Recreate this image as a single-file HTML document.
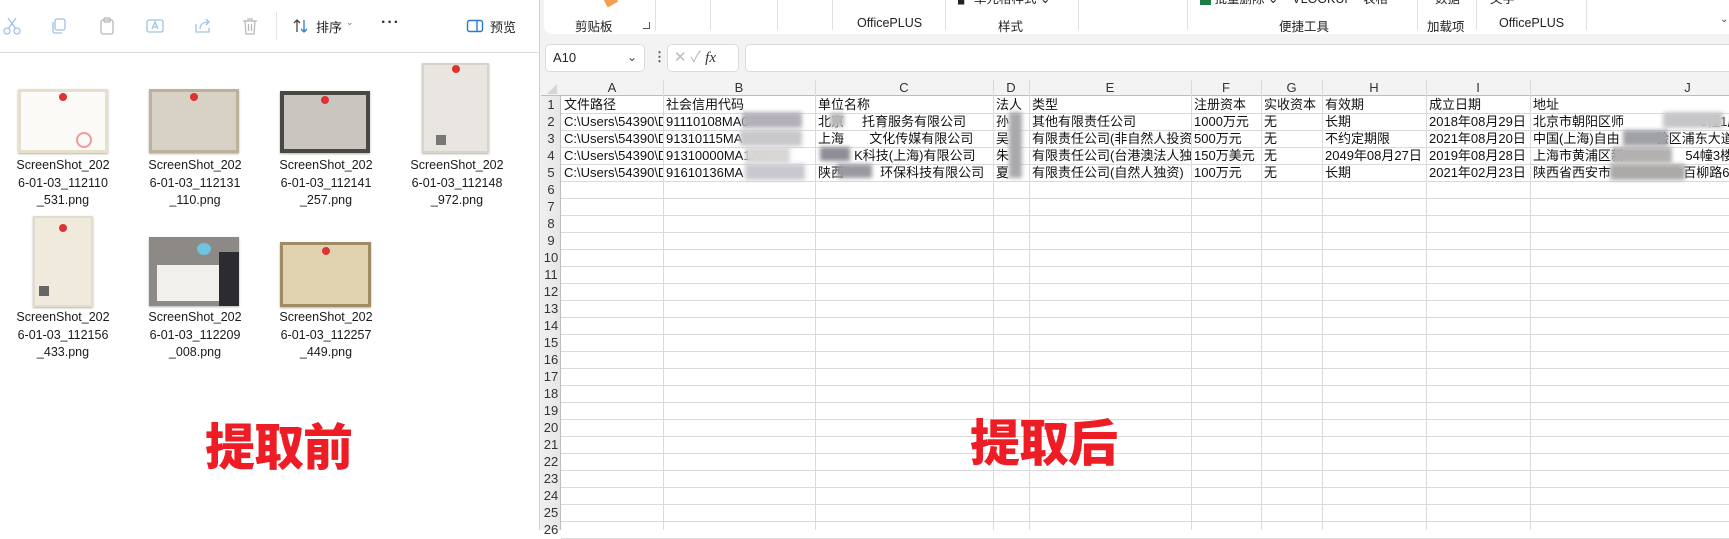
<!DOCTYPE html>
<html><head><meta charset="utf-8"><style>
*{margin:0;padding:0;box-sizing:border-box}
body{width:1729px;height:530px;overflow:hidden;background:#fff;position:relative;font-family:"Liberation Sans","Noto Sans CJK SC",sans-serif;color:#222}
.a{position:absolute}
.ic{position:absolute;top:16px;width:20px;height:20px}
.lbl{position:absolute;width:110px;text-align:center;font-size:12.5px;line-height:17.5px;color:#1a1a1a}
.th{position:absolute;box-shadow:0 1px 2px rgba(0,0,0,.3)}
.seal{position:absolute;width:8px;height:8px;border-radius:50%;background:#d33;left:50%;margin-left:-4px}
.cell{position:absolute;height:17px;line-height:17px;font-size:13px;white-space:nowrap;overflow:hidden;padding-left:2px;color:#111}
.vl{position:absolute;top:80px;width:1px;height:450px;background:#dadada}
.hl{position:absolute;left:561px;height:1px;width:1168px;background:#dadada}
.rn{position:absolute;left:541px;width:20px;height:17px;line-height:17px;font-size:13px;text-align:center;color:#333}
.ch{position:absolute;top:80px;height:16px;line-height:16px;font-size:13px;text-align:center;color:#333}
.blur{position:absolute;filter:blur(2px)}
.red{position:absolute;font-size:50px;font-weight:900;color:#ee1c25;letter-spacing:-1px;font-family:"Noto Sans CJK SC",sans-serif;line-height:1}
.rl{position:absolute;top:16px;font-size:12.5px;color:#222}
.sep{position:absolute;top:0;width:1px;height:30px;background:#e0e0e0}
</style></head><body>

<svg class="ic" style="left:2px" viewBox="0 0 20 20" fill="none" stroke="#9cc3e6" stroke-width="1.3"><circle cx="5" cy="15" r="3"/><circle cx="15" cy="15" r="3"/><path d="M6.5 12.5L14 2M13.5 12.5L6 2"/></svg>
<svg class="ic" style="left:49px" viewBox="0 0 20 20" fill="none" stroke="#9cc3e6" stroke-width="1.3"><rect x="6" y="3" width="10" height="11" rx="2"/><path d="M4 6v9a2 2 0 0 0 2 2h7"/></svg>
<svg class="ic" style="left:97px" viewBox="0 0 20 20" fill="none" stroke="#b8b8b8" stroke-width="1.3"><rect x="4" y="4" width="12" height="14" rx="2"/><rect x="7" y="2" width="6" height="4" rx="1"/></svg>
<svg class="ic" style="left:145px" viewBox="0 0 20 20" fill="none" stroke="#9cc3e6" stroke-width="1.3"><rect x="2" y="4" width="16" height="12" rx="2"/><path d="M7 13l3-7 3 7M8 11h4"/></svg>
<svg class="ic" style="left:193px" viewBox="0 0 20 20" fill="none" stroke="#9cc3e6" stroke-width="1.3"><path d="M3 8v8h13v-4"/><path d="M7 13c0-5 4-7 9-7M13 3l3 3-3 3"/></svg>
<svg class="ic" style="left:240px" viewBox="0 0 20 20" fill="none" stroke="#b8b8b8" stroke-width="1.3"><path d="M3 5h14M8 5V3h4v2M5 5l1 13h8l1-13M8.5 8v7M11.5 8v7"/></svg>
<div class="a" style="left:276px;top:12px;width:1px;height:28px;background:#e5e5e5"></div>
<svg class="ic" style="left:291px" viewBox="0 0 20 20" fill="none" stroke-width="1.3"><path d="M6 16V4M3 7l3-3 3 3" stroke="#444"/><path d="M13 4v12M10 13l3 3 3-3" stroke="#2a7ad5"/></svg>
<div class="a" style="left:316px;top:17px;font-size:13px;color:#222">排序</div>
<div class="a" style="left:346px;top:17px;font-size:9px;color:#777">⌄</div>
<div class="a" style="left:381px;top:14px;font-size:16px;color:#333;letter-spacing:1px;font-weight:bold">···</div>
<svg class="ic" style="left:465px" viewBox="0 0 20 20" fill="none" stroke-width="1.4"><rect x="2.5" y="4.5" width="15" height="11" rx="2" stroke="#2a7ad5"/><path d="M12 5v10" stroke="#2a7ad5"/></svg>
<div class="a" style="left:490px;top:17px;font-size:13px;color:#222">预览</div>
<div class="a" style="left:0;top:52px;width:539px;height:1px;background:#dcdcdc"></div>

<div class="th" style="left:18px;top:89px;width:90px;height:64px;background:#fbfaf6;border:3px solid #e7e1cc"><div class="seal" style="top:1px"></div><div class="a" style="left:55px;top:40px;width:16px;height:16px;border-radius:50%;border:2px solid #f09a9a"></div></div>
<div class="th" style="left:149px;top:89px;width:90px;height:64px;background:#d8d2c6;border:3px solid #bcb29c"><div class="seal" style="top:1px"></div></div>
<div class="th" style="left:280px;top:91px;width:90px;height:62px;background:#c9c6c0;border:4px solid #4a4842"><div class="seal" style="top:1px"></div></div>
<div class="th" style="left:422px;top:63px;width:67px;height:90px;background:#e9e6e2;border:2px solid #d8d3cb"><div class="seal" style="top:0"></div><div class="a" style="left:12px;top:70px;width:10px;height:10px;background:#777"></div></div>
<div class="lbl" style="left:8px;top:157px">ScreenShot_202<br>6-01-03_112110<br>_531.png</div>
<div class="lbl" style="left:140px;top:157px">ScreenShot_202<br>6-01-03_112131<br>_110.png</div>
<div class="lbl" style="left:271px;top:157px">ScreenShot_202<br>6-01-03_112141<br>_257.png</div>
<div class="lbl" style="left:402px;top:157px">ScreenShot_202<br>6-01-03_112148<br>_972.png</div>
<div class="th" style="left:33px;top:216px;width:60px;height:91px;background:#efeadc;border:2px solid #e2dccb"><div class="seal" style="top:6px"></div><div class="a" style="left:4px;top:68px;width:10px;height:10px;background:#666"></div></div>
<div class="th" style="left:149px;top:237px;width:90px;height:69px;background:#8d8a86"><div class="a" style="left:8px;top:28px;width:62px;height:36px;background:#f2f0ec"></div><div class="a" style="left:48px;top:6px;width:14px;height:12px;border-radius:50%;background:#6fc2e0"></div><div class="a" style="left:70px;top:15px;width:20px;height:54px;background:#2c2c30"></div></div>
<div class="th" style="left:280px;top:242px;width:91px;height:65px;background:#e2d3b0;border:3px solid #9f8c62"><div class="seal" style="top:2px"></div></div>
<div class="lbl" style="left:8px;top:309px">ScreenShot_202<br>6-01-03_112156<br>_433.png</div>
<div class="lbl" style="left:140px;top:309px">ScreenShot_202<br>6-01-03_112209<br>_008.png</div>
<div class="lbl" style="left:271px;top:309px">ScreenShot_202<br>6-01-03_112257<br>_449.png</div>

<div class="red" style="left:205px;top:419px">提取前</div>

<div class="a" style="left:539px;top:0;width:1190px;height:530px;background:#f3f3f3;border-left:1px solid #d0d0d0"></div>
<div class="a" style="left:544px;top:0;width:1185px;height:34px;background:#fff;border-radius:0 0 0 8px;overflow:hidden">
<div class="a" style="left:61px;top:-3px;width:12px;height:8px;background:#f0a050;transform:rotate(-30deg)"></div>
<div class="a" style="left:414px;top:-12px;font-size:12.5px">▞ 单元格样式 ⌄</div>
<div class="a" style="left:656px;top:-12px;font-size:12.5px"><span style="display:inline-block;width:11px;height:11px;background:#1e7d45;vertical-align:middle"></span> 批量删除 ⌄ &nbsp;&nbsp; VLOOKUP &nbsp; 表格</div>
<div class="a" style="left:891px;top:-12px;font-size:12.5px">数据</div>
<div class="a" style="left:946px;top:-12px;font-size:12.5px">文字</div>
</div>
<div class="sep" style="left:655px"></div><div class="sep" style="left:710px"></div><div class="sep" style="left:777px"></div><div class="sep" style="left:832px"></div><div class="sep" style="left:945px"></div><div class="sep" style="left:1078px"></div><div class="sep" style="left:1187px"></div><div class="sep" style="left:1417px"></div><div class="sep" style="left:1476px"></div><div class="sep" style="left:1586px"></div>
<div class="rl" style="left:575px">剪贴板</div>
<div class="a" style="left:643px;top:22px;width:7px;height:7px;border-right:1px solid #555;border-bottom:1px solid #555"></div>
<div class="rl" style="left:857px">OfficePLUS</div>
<div class="rl" style="left:998px">样式</div>
<div class="rl" style="left:1279px">便捷工具</div>
<div class="rl" style="left:1427px">加载项</div>
<div class="rl" style="left:1499px">OfficePLUS</div>
<div class="a" style="left:1720px;top:14px;font-size:10px;color:#444">⌄</div>

<div class="a" style="left:545px;top:44px;width:100px;height:28px;background:#fff;border:1px solid #dcdcdc;border-radius:5px;font-size:13px;line-height:26px;padding-left:7px">A10<span style="position:absolute;right:7px;top:-1px;font-size:12px;color:#444">⌄</span></div>
<div class="a" style="left:653px;top:49px;font-size:13px;color:#555;font-weight:bold">⋮</div>
<div class="a" style="left:667px;top:44px;width:72px;height:28px;background:#fff;border:1px solid #dcdcdc;border-radius:5px;font-size:15px;line-height:26px;color:#bbb;padding-left:6px">✕ ✓ <i style="color:#333;font-family:'Liberation Serif',serif">fx</i></div>
<div class="a" style="left:745px;top:44px;width:990px;height:28px;background:#fff;border:1px solid #dcdcdc;border-radius:5px"></div>

<div class="a" style="left:541px;top:80px;width:1188px;height:450px;background:#fff"></div>
<div class="a" style="left:541px;top:80px;width:1188px;height:16px;background:#f3f3f3;border-bottom:1px solid #bdbdbd"></div>
<div class="a" style="left:541px;top:96px;width:20px;height:434px;background:linear-gradient(90deg,#f0f0f0,#e6e6e6);border-right:1px solid #bdbdbd"></div>
<div class="a" style="left:547px;top:84px;width:0;height:0;border-left:10px solid transparent;border-bottom:10px solid #d6d6d6"></div>

<div class="vl" style="left:663px"></div><div class="vl" style="left:815px"></div><div class="vl" style="left:993px"></div><div class="vl" style="left:1029px"></div><div class="vl" style="left:1191px"></div><div class="vl" style="left:1261px"></div><div class="vl" style="left:1322px"></div><div class="vl" style="left:1426px"></div><div class="vl" style="left:1530px"></div>

<div class="ch" style="left:561px;width:102px">A</div><div class="ch" style="left:663px;width:152px">B</div><div class="ch" style="left:815px;width:178px">C</div><div class="ch" style="left:993px;width:36px">D</div><div class="ch" style="left:1029px;width:162px">E</div><div class="ch" style="left:1191px;width:70px">F</div><div class="ch" style="left:1261px;width:61px">G</div><div class="ch" style="left:1322px;width:104px">H</div><div class="ch" style="left:1426px;width:104px">I</div><div class="ch" style="left:1530px;width:315px">J</div>

<div id="rows"></div>
<script>
var h='';for(var i=1;i<=26;i++){var y=96+(i-1)*17;h+='<div class="hl" style="top:'+(y+17)+'px"></div><div class="rn" style="top:'+y+'px">'+i+'</div>';}
document.getElementById('rows').innerHTML=h;
</script>

<div class="cell" style="left:562px;top:96px;width:101px">文件路径</div>
<div class="cell" style="left:664px;top:96px;width:151px">社会信用代码</div>
<div class="cell" style="left:816px;top:96px;width:177px">单位名称</div>
<div class="cell" style="left:994px;top:96px;width:35px">法人</div>
<div class="cell" style="left:1030px;top:96px;width:161px">类型</div>
<div class="cell" style="left:1192px;top:96px;width:69px">注册资本</div>
<div class="cell" style="left:1262px;top:96px;width:60px">实收资本</div>
<div class="cell" style="left:1323px;top:96px;width:103px">有效期</div>
<div class="cell" style="left:1427px;top:96px;width:103px">成立日期</div>
<div class="cell" style="left:1531px;top:96px;width:200px">地址</div>

<div class="cell" style="left:562px;top:113px;width:101px">C:\Users\54390\D</div>
<div class="cell" style="left:664px;top:113px;width:151px">91110108MA0</div>
<div class="cell" style="left:816px;top:113px;width:177px">北京&nbsp;&nbsp;&nbsp;&nbsp;&nbsp;托育服务有限公司</div>
<div class="cell" style="left:994px;top:113px;width:35px">孙</div>
<div class="cell" style="left:1030px;top:113px;width:161px">其他有限责任公司</div>
<div class="cell" style="left:1192px;top:113px;width:69px">1000万元</div>
<div class="cell" style="left:1262px;top:113px;width:60px">无</div>
<div class="cell" style="left:1323px;top:113px;width:103px">长期</div>
<div class="cell" style="left:1427px;top:113px;width:103px">2018年08月29日</div>
<div class="cell" style="left:1531px;top:113px;width:200px">北京市朝阳区师&nbsp;&nbsp;&nbsp;&nbsp;&nbsp;&nbsp;&nbsp;&nbsp;&nbsp;&nbsp;&nbsp;&nbsp;&nbsp;&nbsp;&nbsp;&nbsp;&nbsp;&nbsp;&nbsp;&nbsp;&nbsp;3幢1层</div>

<div class="cell" style="left:562px;top:130px;width:101px">C:\Users\54390\D</div>
<div class="cell" style="left:664px;top:130px;width:151px">91310115MA</div>
<div class="cell" style="left:816px;top:130px;width:177px">上海&nbsp;&nbsp;&nbsp;&nbsp;&nbsp;&nbsp;&nbsp;文化传媒有限公司</div>
<div class="cell" style="left:994px;top:130px;width:35px">吴</div>
<div class="cell" style="left:1030px;top:130px;width:161px">有限责任公司(非自然人投资</div>
<div class="cell" style="left:1192px;top:130px;width:69px">500万元</div>
<div class="cell" style="left:1262px;top:130px;width:60px">无</div>
<div class="cell" style="left:1323px;top:130px;width:103px">不约定期限</div>
<div class="cell" style="left:1427px;top:130px;width:103px">2021年08月20日</div>
<div class="cell" style="left:1531px;top:130px;width:200px">中国(上海)自由&nbsp;&nbsp;&nbsp;&nbsp;&nbsp;&nbsp;&nbsp;&nbsp;&nbsp;&nbsp;验区浦东大道</div>

<div class="cell" style="left:562px;top:147px;width:101px">C:\Users\54390\D</div>
<div class="cell" style="left:664px;top:147px;width:151px">91310000MA1FP</div>
<div class="cell" style="left:816px;top:147px;width:177px">&nbsp;&nbsp;&nbsp;&nbsp;&nbsp;&nbsp;&nbsp;&nbsp;&nbsp;&nbsp;K科技(上海)有限公司</div>
<div class="cell" style="left:994px;top:147px;width:35px">朱</div>
<div class="cell" style="left:1030px;top:147px;width:161px">有限责任公司(台港澳法人独</div>
<div class="cell" style="left:1192px;top:147px;width:69px">150万美元</div>
<div class="cell" style="left:1262px;top:147px;width:60px">无</div>
<div class="cell" style="left:1323px;top:147px;width:103px">2049年08月27日</div>
<div class="cell" style="left:1427px;top:147px;width:103px">2019年08月28日</div>
<div class="cell" style="left:1531px;top:147px;width:200px">上海市黄浦区新&nbsp;&nbsp;&nbsp;&nbsp;&nbsp;&nbsp;&nbsp;&nbsp;&nbsp;&nbsp;&nbsp;&nbsp;&nbsp;&nbsp;&nbsp;&nbsp;&nbsp;54幢3楼</div>

<div class="cell" style="left:562px;top:164px;width:101px">C:\Users\54390\D</div>
<div class="cell" style="left:664px;top:164px;width:151px">91610136MA</div>
<div class="cell" style="left:816px;top:164px;width:177px">陕西&nbsp;&nbsp;&nbsp;&nbsp;&nbsp;&nbsp;&nbsp;&nbsp;&nbsp;&nbsp;环保科技有限公司</div>
<div class="cell" style="left:994px;top:164px;width:35px">夏</div>
<div class="cell" style="left:1030px;top:164px;width:161px">有限责任公司(自然人独资)</div>
<div class="cell" style="left:1192px;top:164px;width:69px">100万元</div>
<div class="cell" style="left:1262px;top:164px;width:60px">无</div>
<div class="cell" style="left:1323px;top:164px;width:103px">长期</div>
<div class="cell" style="left:1427px;top:164px;width:103px">2021年02月23日</div>
<div class="cell" style="left:1531px;top:164px;width:200px">陕西省西安市&nbsp;&nbsp;&nbsp;&nbsp;&nbsp;&nbsp;&nbsp;&nbsp;&nbsp;&nbsp;&nbsp;&nbsp;&nbsp;&nbsp;&nbsp;&nbsp;&nbsp;&nbsp;&nbsp;&nbsp;百柳路62</div>

<div class="blur" style="left:742px;top:112px;width:60px;height:16px;background:#b4b0ba"></div>
<div class="blur" style="left:740px;top:130px;width:62px;height:16px;background:#c8c8cc"></div>
<div class="blur" style="left:745px;top:147px;width:45px;height:16px;background:#d7d6d4"></div>
<div class="blur" style="left:745px;top:164px;width:60px;height:16px;background:#c9c8d0"></div>
<div class="blur" style="left:820px;top:147px;width:30px;height:14px;background:#8e8c94"></div>
<div class="blur" style="left:830px;top:113px;width:14px;height:14px;background:#b8b8b8"></div>
<div class="blur" style="left:837px;top:164px;width:35px;height:14px;background:#9a98a0"></div>
<div class="blur" style="left:1009px;top:112px;width:13px;height:66px;background:#a9a9ad"></div>
<div class="blur" style="left:1663px;top:112px;width:60px;height:16px;background:#c6c6c8"></div>
<div class="blur" style="left:1623px;top:130px;width:45px;height:16px;background:#a0a2a8"></div>
<div class="blur" style="left:1612px;top:147px;width:60px;height:16px;background:#b3b0b0"></div>
<div class="blur" style="left:1610px;top:164px;width:75px;height:16px;background:#aba8a8"></div>

<div class="red" style="left:970px;top:415px">提取后</div>
</body></html>
